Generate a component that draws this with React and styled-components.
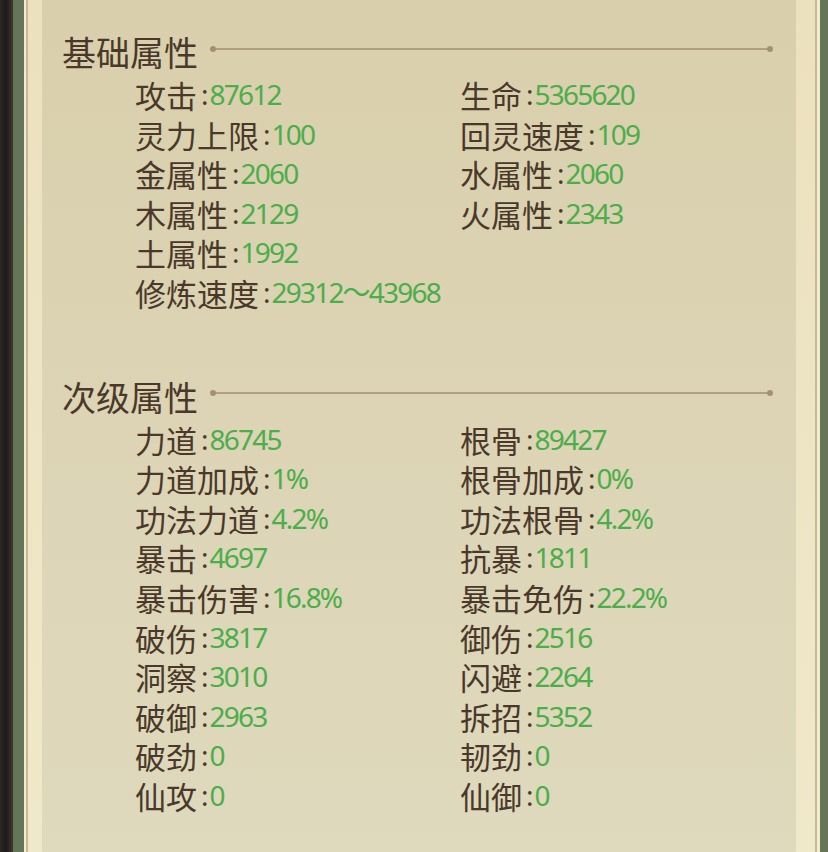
import styled, { createGlobalStyle } from "styled-components";

const GlobalStyle = createGlobalStyle`
  html, body {
    margin: 0;
    padding: 0;
    background: #1f1d1a;
    overflow: hidden;
  }
`;

const Page = styled.div`
  width: 828px;
  height: 852px;
  display: flex;
  background: linear-gradient(90deg, #2b2925 0px, #1c1a17 6px, #34302a 11px);
`;

const Frame = styled.div`
  margin-left: 11px;
  flex: 1;
  display: flex;
  border-left: 2px solid #3e3527;
  background: #647558;
  padding: 0 8px 0 11px;
`;

const Bezel = styled.div`
  flex: 1;
  display: flex;
  background: #f2ebcd;
  padding: 0 3px 0 2px;
`;

const Edge = styled.div`
  flex: 1;
  display: flex;
  border-left: 2px solid #c9b992;
  border-right: 2px solid #c9b992;
  background: linear-gradient(180deg, #ebe1be 0%, #f0e8ca 100%);
  padding: 0 19px 0 14px;
`;

const Panel = styled.div`
  flex: 1;
  box-sizing: border-box;
  padding: 29px 25px 0 20px;
  background: linear-gradient(180deg, #d9cfac 0%, #dcd4b5 50%, #dfd9bd 100%);
  font-family: "Noto Sans CJK SC", "Noto Sans", sans-serif;
  color: #4a392a;
`;

const Section = styled.section`
  margin-bottom: ${(p) => p.$gap || 0}px;
`;

const Header = styled.div`
  display: flex;
  align-items: center;
  height: 46px;
  font-size: 34px;
  line-height: 46px;
  color: #4a392a;
`;

const Rule = styled.div`
  position: relative;
  flex: 1;
  height: 2px;
  margin: -7px 0 0 14px;
  background: #b0a080;

  &::before,
  &::after {
    content: "";
    position: absolute;
    top: -2px;
    width: 6px;
    height: 6px;
    border-radius: 50%;
    background: #a49170;
  }
  &::before { left: -2px; }
  &::after { right: -2px; }
`;

const Grid = styled.div`
  display: grid;
  grid-template-columns: 325px 1fr;
  grid-auto-rows: 39.6px;
  padding-left: 73px;
`;

const Stat = styled.div`
  grid-column: ${(p) => (p.$wide ? "1 / -1" : "auto")};
  display: flex;
  align-items: center;
  white-space: nowrap;
  font-size: 31px;
  line-height: 39.6px;
`;

const Label = styled.span`
  color: #4a392a;
`;

const Colon = styled.span`
  color: #4a392a;
  font-family: "Noto Sans", sans-serif;
  font-size: 28px;
  margin-left: 4px;
`;

const Value = styled.span`
  color: #4cae4a;
  font-family: "Noto Sans", "Noto Sans CJK SC", sans-serif;
  font-size: 28px;
  letter-spacing: -1.8px;
  margin-left: 1px;
`;

const basic = [
  ["攻击", "87612"],
  ["生命", "5365620"],
  ["灵力上限", "100"],
  ["回灵速度", "109"],
  ["金属性", "2060"],
  ["水属性", "2060"],
  ["木属性", "2129"],
  ["火属性", "2343"],
  ["土属性", "1992", true],
  ["修炼速度", "29312～43968", true],
];

const secondary = [
  ["力道", "86745"],
  ["根骨", "89427"],
  ["力道加成", "1%"],
  ["根骨加成", "0%"],
  ["功法力道", "4.2%"],
  ["功法根骨", "4.2%"],
  ["暴击", "4697"],
  ["抗暴", "1811"],
  ["暴击伤害", "16.8%"],
  ["暴击免伤", "22.2%"],
  ["破伤", "3817"],
  ["御伤", "2516"],
  ["洞察", "3010"],
  ["闪避", "2264"],
  ["破御", "2963"],
  ["拆招", "5352"],
  ["破劲", "0"],
  ["韧劲", "0"],
  ["仙攻", "0"],
  ["仙御", "0"],
];

function StatGrid({ items }) {
  return (
    <Grid>
      {items.map(([name, value, wide]) => (
        <Stat key={name} $wide={wide}>
          <Label>{name}</Label>
          <Colon>:</Colon>
          <Value>{value}</Value>
        </Stat>
      ))}
    </Grid>
  );
}

export default function App() {
  return (
    <>
      <GlobalStyle />
      <Page>
        <Frame>
          <Bezel>
            <Edge>
              <Panel>
                <Section $gap={61}>
                  <Header>
                    基础属性
                    <Rule />
                  </Header>
                  <StatGrid items={basic} />
                </Section>
                <Section>
                  <Header>
                    次级属性
                    <Rule />
                  </Header>
                  <StatGrid items={secondary} />
                </Section>
              </Panel>
            </Edge>
          </Bezel>
        </Frame>
      </Page>
    </>
  );
}
